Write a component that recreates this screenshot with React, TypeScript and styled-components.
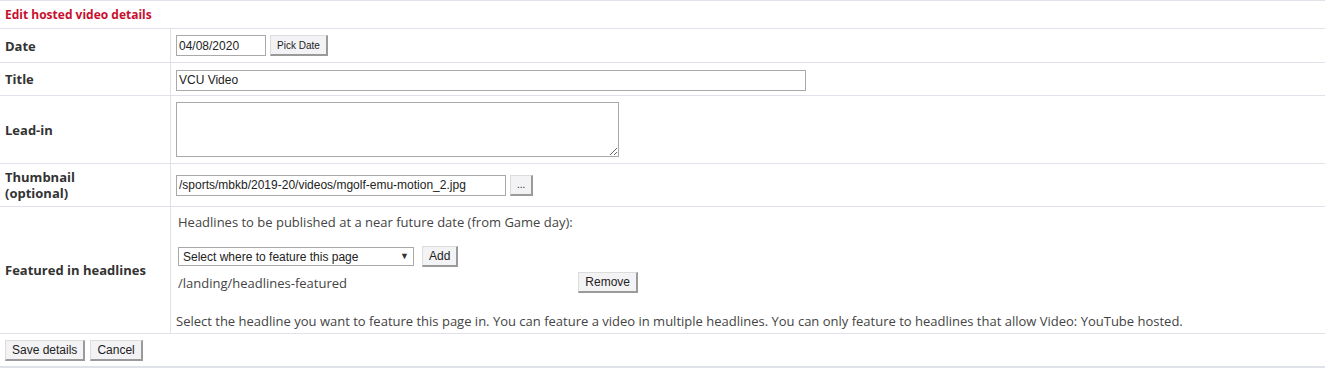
import React from 'react'
import styled, { createGlobalStyle } from 'styled-components'

const GlobalStyle = createGlobalStyle`
  body {
    margin: 0;
    background: #fff;
    font-family: "Open Sans", "Liberation Sans", Arial, sans-serif;
    color: #333;
  }
`

const lineColor = '#dfe2e8'

const FormTable = styled.table`
  width: 100%;
  border-collapse: collapse;
  border-top: 1px solid ${lineColor};
  border-bottom: 2px solid ${lineColor};
`

const Heading = styled.td`
  height: 27px;
  padding: 0 5px;
  font-size: 12px;
  font-weight: 700;
  color: #c8102e;
  border-bottom: 1px solid ${lineColor};
`

const Row = styled.tr<{ $height: number }>`
  height: ${p => p.$height}px;
  border-bottom: 1px solid ${lineColor};
`

const Label = styled.th`
  width: 160px;
  padding: 0 5px;
  text-align: left;
  font-size: 13px;
  font-weight: 700;
  line-height: 16px;
  color: #333;
  border-right: 1px solid ${lineColor};
`

const Field = styled.td`
  padding: 0 5px;
  vertical-align: middle;
`

const FieldLine = styled.div`
  display: flex;
  align-items: center;
  gap: 4px;
`

const TextInput = styled.input<{ $width: number }>`
  box-sizing: border-box;
  width: ${p => p.$width}px;
  height: 21px;
  margin: 0;
  padding: 0 2px;
  border: 1px solid #a9a9a9;
  font-family: "Liberation Sans", Arial, sans-serif;
  font-size: 12px;
  color: #222;
  outline: none;
`

const TextArea = styled.textarea`
  box-sizing: border-box;
  display: block;
  width: 443px;
  height: 55px;
  margin: 0;
  border: 1px solid #a9a9a9;
  resize: both;
`

const Button = styled.button<{ $small?: boolean }>`
  box-sizing: border-box;
  height: 21px;
  margin: 0;
  padding: 0 6px;
  background: #f3f3f5;
  border: 1px solid #dcdcdc;
  border-right: 2px solid #9a9a9a;
  border-bottom: 2px solid #9a9a9a;
  font-family: "Liberation Sans", Arial, sans-serif;
  font-size: ${p => (p.$small ? '10px' : '12px')};
  color: #222;
`

const FeaturedField = styled.td`
  padding: 6px 5px 3px;
  vertical-align: top;
`

const Intro = styled.div`
  margin-left: 2px;
  font-size: 13px;
  line-height: 18px;
  color: #444;
`

const SelectLine = styled.div`
  display: flex;
  align-items: center;
  gap: 8px;
  margin: 15px 0 0 2px;
`

const SelectBox = styled.div`
  position: relative;
  width: 236px;
  height: 19px;
`

const Select = styled.select`
  appearance: none;
  display: block;
  box-sizing: border-box;
  width: 100%;
  height: 100%;
  margin: 0;
  padding: 0 18px 0 4px;
  border: 1px solid #a9a9a9;
  border-radius: 0;
  background: #fff;
  font-family: "Liberation Sans", Arial, sans-serif;
  font-size: 12px;
  color: #222;
`

const Arrow = styled.span`
  position: absolute;
  right: 5px;
  top: 3px;
  font-size: 9px;
  line-height: 12px;
  color: #333;
  pointer-events: none;
`

const FeaturedItem = styled.div`
  display: flex;
  align-items: center;
  justify-content: space-between;
  width: 460px;
  margin: 5px 0 0 2px;
  font-size: 13px;
  color: #444;
`

const Note = styled.div`
  margin-top: 19px;
  font-size: 13px;
  line-height: 18px;
  color: #444;
`

const Footer = styled.td`
  height: 32px;
  padding: 0 5px;
`

const Actions = styled.div`
  display: flex;
  gap: 5px;
`

export default function App() {
  return (
    <>
      <GlobalStyle />
      <FormTable>
        <tbody>
          <tr>
            <Heading colSpan={2}>Edit hosted video details</Heading>
          </tr>
          <Row $height={34}>
            <Label>Date</Label>
            <Field>
              <FieldLine>
                <TextInput $width={90} defaultValue="04/08/2020" />
                <Button $small>Pick Date</Button>
              </FieldLine>
            </Field>
          </Row>
          <Row $height={33}>
            <Label>Title</Label>
            <Field>
              <TextInput $width={630} defaultValue="VCU Video" />
            </Field>
          </Row>
          <Row $height={68}>
            <Label>Lead-in</Label>
            <Field>
              <TextArea />
            </Field>
          </Row>
          <Row $height={43}>
            <Label>
              Thumbnail
              <br />
              (optional)
            </Label>
            <Field>
              <FieldLine>
                <TextInput $width={330} defaultValue="/sports/mbkb/2019-20/videos/mgolf-emu-motion_2.jpg" />
                <Button $small>...</Button>
              </FieldLine>
            </Field>
          </Row>
          <Row $height={127}>
            <Label>Featured in headlines</Label>
            <FeaturedField>
              <Intro>Headlines to be published at a near future date (from Game day):</Intro>
              <SelectLine>
                <SelectBox>
                  <Select defaultValue="">
                    <option value="">Select where to feature this page</option>
                  </Select>
                  <Arrow>▼</Arrow>
                </SelectBox>
                <Button>Add</Button>
              </SelectLine>
              <FeaturedItem>
                <span>/landing/headlines-featured</span>
                <Button>Remove</Button>
              </FeaturedItem>
              <Note>
                Select the headline you want to feature this page in. You can feature a video in multiple
                headlines. You can only feature to headlines that allow Video: YouTube hosted.
              </Note>
            </FeaturedField>
          </Row>
          <tr>
            <Footer colSpan={2}>
              <Actions>
                <Button>Save details</Button>
                <Button>Cancel</Button>
              </Actions>
            </Footer>
          </tr>
        </tbody>
      </FormTable>
    </>
  )
}
